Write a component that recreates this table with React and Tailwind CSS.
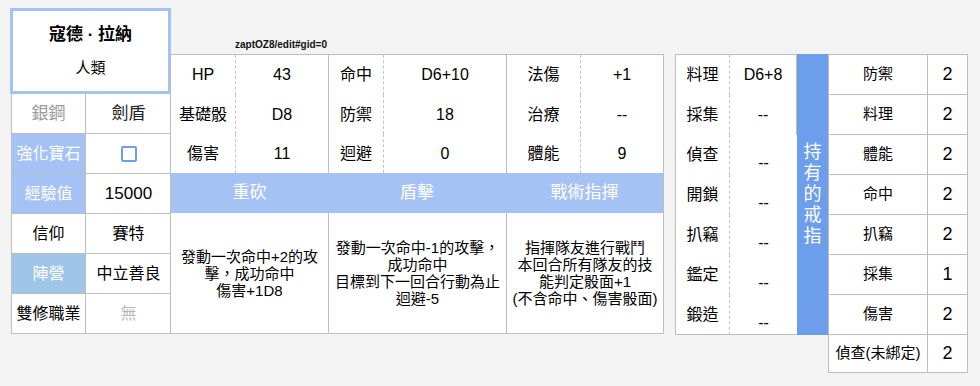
import React from "react";

const line = "border-[#bdbdbd]";
const dash = "border-dashed border-[#c4c4c4]";

const profileRows = [
  { label: "銀鋼", value: "劍盾", labelClass: "text-[#9a9a9a] text-[17px]", valueClass: "text-[#222] text-[17px]" },
  { label: "強化寶石", value: "checkbox", fill: "bg-[#a4c2f4]" },
  { label: "經驗值", value: "15000", fill: "bg-[#a4c2f4]", valueClass: "text-black text-[17px]" },
  { label: "信仰", value: "賽特" },
  { label: "陣營", value: "中立善良", fill: "bg-[#9fc5e8]" },
  { label: "雙修職業", value: "無", valueClass: "text-[#b7b7b7]" },
];

const stats = [
  ["HP", "43", "命中", "D6+10", "法傷", "+1"],
  ["基礎骰", "D8", "防禦", "18", "治療", "--"],
  ["傷害", "11", "迴避", "0", "體能", "9"],
];

const skills = [
  { name: "重砍", lines: ["發動一次命中+2的攻", "擊，成功命中", "傷害+1D8"] },
  { name: "盾擊", lines: ["發動一次命中-1的攻擊，", "成功命中", "目標到下一回合行動為止", "迴避-5"] },
  { name: "戰術指揮", lines: ["指揮隊友進行戰鬥", "本回合所有隊友的技", "能判定骰面+1", "(不含命中、傷害骰面)"] },
];

const crafts = [
  ["料理", "D6+8"],
  ["採集", "--"],
  ["偵查", "--"],
  ["開鎖", "--"],
  ["扒竊", "--"],
  ["鑑定", "--"],
  ["鍛造", "--"],
];

const rings = [
  ["防禦", "2"],
  ["料理", "2"],
  ["體能", "2"],
  ["命中", "2"],
  ["扒竊", "2"],
  ["採集", "1"],
  ["傷害", "2"],
  ["偵查(未綁定)", "2"],
];

function ProfileCard() {
  return (
    <div className="w-[161px] shrink-0">
      <div className="h-[86px] border-[3px] border-[#a4c2f4] bg-white flex flex-col items-center">
        <div className="mt-[13px] text-[17px] leading-[22px] font-bold text-black">寇德 · 拉納</div>
        <div className="mt-[12px] text-[15px] leading-[20px] text-black">人類</div>
      </div>
      <div className={`ml-[1px] border-l ${line} bg-white`}>
        {profileRows.map((r) => (
          <div key={r.label} className={`grid grid-cols-[74px_1fr] h-[40px] border-b ${line}`}>
            <div
              className={`flex items-center justify-center border-r ${line} ${
                r.fill ? `${r.fill} text-white text-[16px]` : r.labelClass || "text-black text-[16px]"
              }`}
            >
              {r.label}
            </div>
            <div className={`flex items-center justify-center ${r.valueClass || "text-black text-[16px]"}`}>
              {r.value === "checkbox" ? (
                <span className="block w-[16px] h-[16px] border-2 border-[#6d9eeb] rounded-[2px] bg-white" />
              ) : (
                r.value
              )}
            </div>
          </div>
        ))}
      </div>
    </div>
  );
}

function StatsBlock() {
  const colBorder = ["", `border-l ${dash}`, `border-l ${line}`, `border-l ${dash}`, `border-l ${line}`, `border-l ${dash}`];
  return (
    <div className="w-[494px] shrink-0 -ml-[1px]">
      <div className="h-[46px] flex items-end pl-[65px] pb-[3px]">
        <span className="text-[10px] leading-[12px] font-bold text-[#111]">zaptOZ8/edit#gid=0</span>
      </div>
      <div className={`border ${line} bg-white`}>
        <div className="grid grid-cols-[64px_93px_55px_123px_74px_83px] grid-rows-[40px_39px_39px]">
          {stats.map((row, ri) =>
            row.map((cell, ci) => (
              <div
                key={`${ri}-${ci}`}
                className={`flex items-center justify-center text-[16px] text-black ${colBorder[ci]}`}
              >
                {cell}
              </div>
            ))
          )}
        </div>
        <div className="grid grid-cols-[157px_178px_157px] h-[40px] bg-[#a4c2f4]">
          {skills.map((s) => (
            <div key={s.name} className="flex items-center justify-center text-[17px] text-white">
              {s.name}
            </div>
          ))}
        </div>
        <div className="grid grid-cols-[157px_178px_157px] h-[120px]">
          {skills.map((s, i) => (
            <div
              key={s.name}
              className={`flex flex-col items-center justify-center text-[15px] leading-[17px] text-black whitespace-nowrap ${
                i > 0 ? `border-l ${line}` : ""
              }`}
            >
              {s.lines.map((l) => (
                <span key={l}>{l}</span>
              ))}
            </div>
          ))}
        </div>
      </div>
    </div>
  );
}

function CraftTable() {
  return (
    <div className={`w-[122px] border-l border-t border-b ${line} bg-white`}>
      {crafts.map(([name, val], i) => (
        <div
          key={name}
          className={`grid grid-cols-[53px_1fr] ${i === 6 ? "h-[39px]" : "h-[40px]"} ${
            i < 2 ? `border-r ${line}` : ""
          }`}
        >
          <div className="flex items-center justify-center text-[16px] text-black">{name}</div>
          <div
            className={`flex items-center justify-center text-[16px] text-black border-l ${dash} ${
              i > 1 ? "pt-[16px]" : ""
            }`}
          >
            {val}
          </div>
        </div>
      ))}
    </div>
  );
}

function RingColumn() {
  return (
    <div className="w-[31px] h-[281px] bg-[#6d9eeb] flex flex-col items-center justify-center text-white text-[18px] leading-[21px]">
      {"持有的戒指".split("").map((c) => (
        <span key={c}>{c}</span>
      ))}
    </div>
  );
}

function RingTable() {
  return (
    <div className={`w-[140px] border-l border-r border-t ${line} bg-white`}>
      {rings.map(([name, val], i) => (
        <div
          key={name}
          className={`grid grid-cols-[99px_1fr] border-b ${line} ${i === 7 ? "h-[38px]" : "h-[40px]"}`}
        >
          <div className={`flex items-center justify-center text-[15px] text-black border-r ${line}`}>{name}</div>
          <div className="flex items-center justify-center text-[18px] text-black">{val}</div>
        </div>
      ))}
    </div>
  );
}

export default function App() {
  return (
    <div className="w-[980px] h-[386px] bg-[#f3f3f3] pt-[8px] pl-[10px] flex items-start font-['Liberation_Sans','Noto_Sans_CJK_TC',sans-serif]">
      <ProfileCard />
      <StatsBlock />
      <div className="ml-[11px] mt-[46px] flex items-start">
        <CraftTable />
        <RingColumn />
        <RingTable />
      </div>
    </div>
  );
}
